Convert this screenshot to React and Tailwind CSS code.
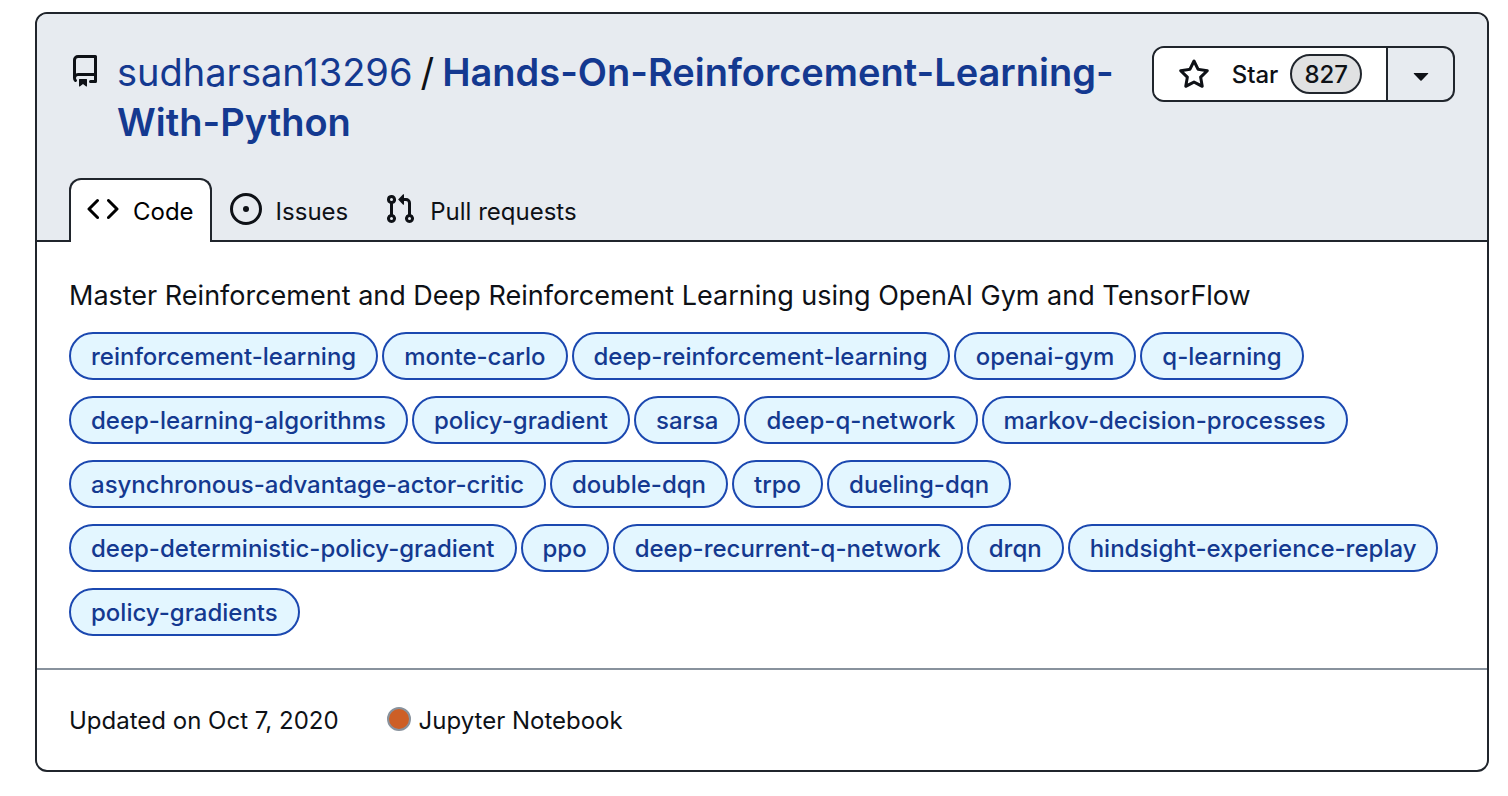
const topics = [
  'reinforcement-learning',
  'monte-carlo',
  'deep-reinforcement-learning',
  'openai-gym',
  'q-learning',
  'deep-learning-algorithms',
  'policy-gradient',
  'sarsa',
  'deep-q-network',
  'markov-decision-processes',
  'asynchronous-advantage-actor-critic',
  'double-dqn',
  'trpo',
  'dueling-dqn',
  'deep-deterministic-policy-gradient',
  'ppo',
  'deep-recurrent-q-network',
  'drqn',
  'hindsight-experience-replay',
  'policy-gradients',
];

const icons = {
  repo: [
    'M2 2.5A2.5 2.5 0 0 1 4.5 0h8.75a.75.75 0 0 1 .75.75v12.5a.75.75 0 0 1-.75.75h-2.5a.75.75 0 0 1 0-1.5h1.75v-2h-8a1 1 0 0 0-.714 1.7.75.75 0 1 1-1.072 1.05A2.495 2.495 0 0 1 2 11.5Zm10.5-1h-8a1 1 0 0 0-1 1v6.708A2.486 2.486 0 0 1 4.5 9h8ZM5 12.25v3.25a.25.25 0 0 0 .4.2l1.45-1.087a.249.249 0 0 1 .3 0L8.6 15.7a.25.25 0 0 0 .4-.2v-3.25a.25.25 0 0 0-.25-.25h-3.5a.25.25 0 0 0-.25.25Z',
  ],
  star: [
    'M8 .25a.75.75 0 0 1 .673.418l1.882 3.815 4.21.612a.75.75 0 0 1 .416 1.279l-3.046 2.97.719 4.192a.751.751 0 0 1-1.088.791L8 12.347l-3.766 1.98a.75.75 0 0 1-1.088-.79l.72-4.194L.818 6.374a.75.75 0 0 1 .416-1.28l4.21-.611L7.327.668A.75.75 0 0 1 8 .25Zm0 2.445L6.615 5.5a.75.75 0 0 1-.564.41l-3.097.45 2.24 2.184a.75.75 0 0 1 .216.664l-.528 3.084 2.769-1.456a.75.75 0 0 1 .698 0l2.77 1.456-.53-3.084a.75.75 0 0 1 .216-.664l2.24-2.183-3.096-.45a.75.75 0 0 1-.564-.41L8 2.694Z',
  ],
  triangle: [
    'm4.427 7.427 3.396 3.396a.25.25 0 0 0 .354 0l3.396-3.396A.25.25 0 0 0 11.396 7H4.604a.25.25 0 0 0-.177.427Z',
  ],
  code: [
    'm11.28 3.22 4.25 4.25a.75.75 0 0 1 0 1.06l-4.25 4.25a.749.749 0 0 1-1.275-.326.749.749 0 0 1 .215-.734L13.94 8l-3.72-3.72a.749.749 0 0 1 .326-1.275.749.749 0 0 1 .734.215Zm-6.56 0a.751.751 0 0 1 1.042.018.751.751 0 0 1 .018 1.042L2.06 8l3.72 3.72a.749.749 0 0 1-.326 1.275.749.749 0 0 1-.734-.215L.47 8.53a.75.75 0 0 1 0-1.06Z',
  ],
  issue: [
    'M8 9.5a1.5 1.5 0 1 0 0-3 1.5 1.5 0 0 0 0 3Z',
    'M8 0a8 8 0 1 1 0 16A8 8 0 0 1 8 0ZM1.5 8a6.5 6.5 0 1 0 13 0 6.5 6.5 0 0 0-13 0Z',
  ],
  pull: [
    'M1.5 3.25a2.25 2.25 0 1 1 3 2.122v5.256a2.251 2.251 0 1 1-1.5 0V5.372A2.25 2.25 0 0 1 1.5 3.25Zm5.677-.177L9.573.677A.25.25 0 0 1 10 .854V2.5h1A2.5 2.5 0 0 1 13.5 5v5.628a2.251 2.251 0 1 1-1.5 0V5a1 1 0 0 0-1-1h-1v1.646a.25.25 0 0 1-.427.177L7.177 3.427a.25.25 0 0 1 0-.354ZM3.75 2.5a.75.75 0 1 0 0 1.5.75.75 0 0 0 0-1.5Zm0 9.5a.75.75 0 1 0 0 1.5.75.75 0 0 0 0-1.5Zm8.25.75a.75.75 0 1 0 1.5 0 .75.75 0 0 0-1.5 0Z',
  ],
};

function Icon({ name }) {
  return (
    <svg viewBox="0 0 16 16" className="size-8 shrink-0 fill-current" aria-hidden="true">
      {icons[name].map((d) => (
        <path key={d} d={d} />
      ))}
    </svg>
  );
}

function Tab({ icon, label, active }) {
  return (
    <a
      href="#"
      aria-current={active ? 'page' : undefined}
      className={
        active
          ? 'flex h-16 items-start gap-[14px] rounded-t-xl border-2 border-b-0 border-[#20252c] bg-white px-4 pt-[13px] text-black'
          : 'flex h-16 items-start gap-[14px] px-[18px] pt-[15px]'
      }
    >
      <Icon name={icon} />
      <span className="pt-0.5 leading-[34px]">{label}</span>
    </a>
  );
}

export default function App() {
  return (
    <main className="bg-white pt-3 pr-[19px] pb-6 pl-[35px] font-['Inter',sans-serif] text-2xl text-[#0e1116]">
      <article className="overflow-hidden rounded-xl border-2 border-[#20252c]">
        <header className="bg-[#e7ebf0] pt-8">
          <div className="flex items-start justify-between gap-5 px-8">
            <div className="flex gap-4">
              <span className="pt-[9px]">
                <Icon name="repo" />
              </span>
              <h1 className="pt-px text-[38px] leading-[50px] font-normal">
                <a href="#" className="text-[#143990]">sudharsan13296</a>
                <span className="mx-2">/</span>
                <a href="#" className="font-semibold text-[#143990]">Hands-On-Reinforcement-Learning-With-Python</a>
              </h1>
            </div>
            <div className="flex h-14 shrink-0 overflow-hidden rounded-xl border-2 border-[#20252c]">
              <button type="button" className="flex items-center bg-white px-6 font-medium">
                <span className="pt-0.5">
                  <Icon name="star" />
                </span>
                <span className="pt-0.5 pl-[22px]">Star</span>
                <span className="ml-3 flex h-10 items-center rounded-full border-2 border-[#20252c] bg-[#e0e1e2] px-3 pt-0.5">827</span>
              </button>
              <button type="button" aria-label="Choose a list" className="flex w-[67px] items-center justify-center border-l-2 border-[#20252c] pt-0.5">
                <Icon name="triangle" />
              </button>
            </div>
          </div>
          <nav className="mt-[31px] flex bg-[linear-gradient(#20252c,#20252c)] bg-[length:100%_2px] bg-bottom bg-no-repeat px-8">
            <Tab icon="code" label="Code" active />
            <Tab icon="issue" label="Issues" />
            <Tab icon="pull" label="Pull requests" />
          </nav>
        </header>
        <section className="p-8">
          <p className="mb-[14px] text-[27px] leading-[44px]">
            Master Reinforcement and Deep Reinforcement Learning using OpenAI Gym and TensorFlow
          </p>
          <ul className="flex flex-wrap gap-x-1 gap-y-4">
            {topics.map((topic) => (
              <li key={topic}>
                <a href="#" className="flex h-12 items-center rounded-full border-2 border-[#1b48b0] bg-[#e3f6ff] px-5 pt-0.5 font-medium text-[#143990]">
                  {topic}
                </a>
              </li>
            ))}
          </ul>
        </section>
        <footer className="flex gap-12 border-t-2 border-[#88929d] px-8 pt-8 pb-[30px] leading-[38px]">
          <span>Updated on Oct 7, 2020</span>
          <span className="flex items-center gap-2">
            <span className="mb-1 size-6 rounded-full border-2 border-[#88929d] bg-[#cd5f26]" />
            Jupyter Notebook
          </span>
        </footer>
      </article>
    </main>
  );
}
